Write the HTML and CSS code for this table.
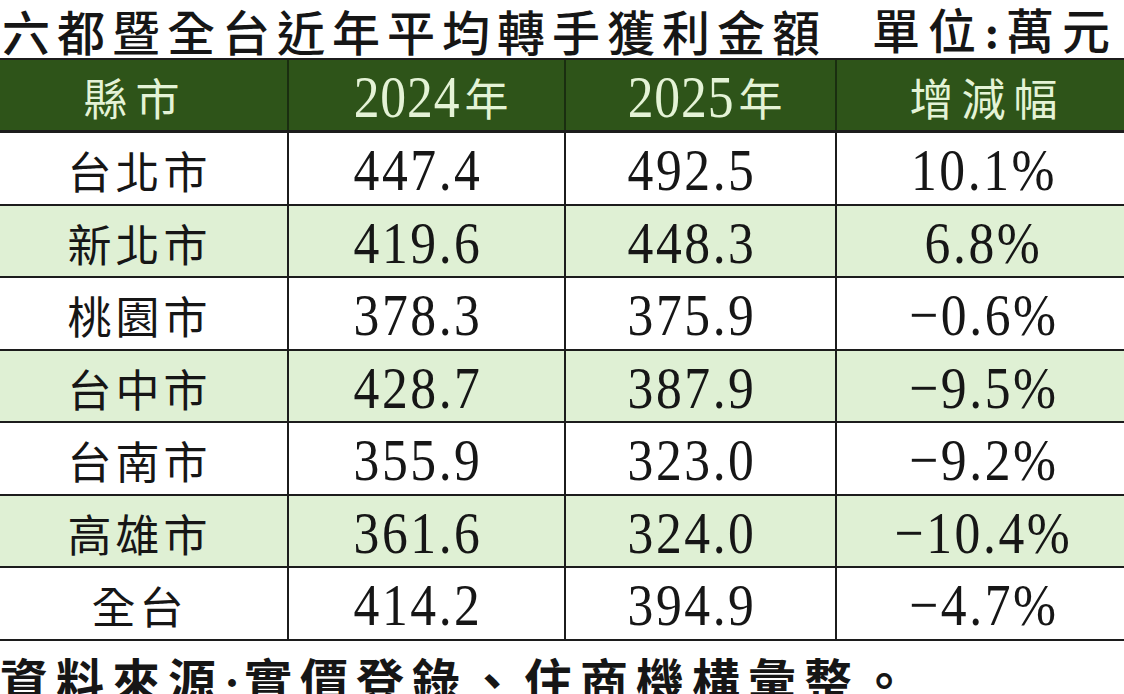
FILE: index.html
```html
<!DOCTYPE html>
<html lang="zh-Hant">
<head>
    <meta charset="UTF-8">
    <meta name="viewport" content="width=device-width, initial-scale=1.0">
    <title>六都暨全台近年平均轉手獲利金額</title>
    <link rel="stylesheet" href="styles.css">
</head>
<body>
    <div class="sheet">
        <div class="title">
            <span class="title-main">六都暨全台近年平均轉手獲利金額</span>
            <span class="title-unit">單位<span class="colon">:</span>萬元</span>
        </div>

        <div class="grid">
            <div class="row head">
                <div class="cell name">縣市</div>
                <div class="cell"><span class="num">2024</span>年</div>
                <div class="cell"><span class="num">2025</span>年</div>
                <div class="cell name change">增減幅</div>
            </div>
            <div class="row">
                <div class="cell name">台北市</div>
                <div class="cell"><span class="num">447.4</span></div>
                <div class="cell"><span class="num">492.5</span></div>
                <div class="cell"><span class="num">10.1%</span></div>
            </div>
            <div class="row alt">
                <div class="cell name">新北市</div>
                <div class="cell"><span class="num">419.6</span></div>
                <div class="cell"><span class="num">448.3</span></div>
                <div class="cell"><span class="num">6.8%</span></div>
            </div>
            <div class="row">
                <div class="cell name">桃園市</div>
                <div class="cell"><span class="num">378.3</span></div>
                <div class="cell"><span class="num">375.9</span></div>
                <div class="cell"><span class="num">−0.6%</span></div>
            </div>
            <div class="row alt">
                <div class="cell name">台中市</div>
                <div class="cell"><span class="num">428.7</span></div>
                <div class="cell"><span class="num">387.9</span></div>
                <div class="cell"><span class="num">−9.5%</span></div>
            </div>
            <div class="row">
                <div class="cell name">台南市</div>
                <div class="cell"><span class="num">355.9</span></div>
                <div class="cell"><span class="num">323.0</span></div>
                <div class="cell"><span class="num">−9.2%</span></div>
            </div>
            <div class="row alt">
                <div class="cell name">高雄市</div>
                <div class="cell"><span class="num">361.6</span></div>
                <div class="cell"><span class="num">324.0</span></div>
                <div class="cell"><span class="num">−10.4%</span></div>
            </div>
            <div class="row">
                <div class="cell name">全台</div>
                <div class="cell"><span class="num">414.2</span></div>
                <div class="cell"><span class="num">394.9</span></div>
                <div class="cell"><span class="num">−4.7%</span></div>
            </div>
        </div>

        <div class="source">資料來源<span class="dot">·</span>實價登錄、住商機構彙整。</div>
    </div>
</body>
</html>
```

FILE: styles.css
```css
body {
    margin: 0;
    background: #ffffff;
    color: #161616;
    font-family: "Noto Sans CJK TC", "Liberation Serif", serif;
    overflow: hidden;
}

.sheet {
    width: 1124px;
    height: 694px;
    overflow: hidden;
}

/* title line above the table */
.title {
    display: flex;
    align-items: center;
    height: 58px;
    padding-top: 2px;
    box-sizing: border-box;
    font-size: 48px;
    font-weight: 500;
    line-height: 1;
}

.title-main {
    letter-spacing: 7px;
    padding-left: 2px;
}

.title-unit {
    margin-left: auto;
    padding-right: 6px;
    letter-spacing: 8px;
}

.title-unit .colon {
    font-family: "Liberation Serif", serif;
    font-weight: 700;
    letter-spacing: 6px;
}

/* table */
.grid {
    border-top: 2px solid #1c1c1c;
}

.row {
    display: grid;
    grid-template-columns: 287px 277px 271px 289px;
    height: 72.5px;
    box-sizing: border-box;
    border-bottom: 2px solid #1c1c1c;
}

.row.head {
    height: 73px;
    background: #2e5419;
    color: #e4f3d6;
    border-bottom-width: 3px;
}

.row.alt {
    background: #dff0d4;
}

.cell {
    display: flex;
    align-items: center;
    justify-content: center;
    font-size: 44px;
    line-height: 1;
    padding-top: 4px;
}

.cell + .cell {
    border-left: 2px solid #1c1c1c;
}

.row.head .cell {
    border-left-color: #1a2e10;
}

.cell.name {
    letter-spacing: 4px;
    padding-right: 8px;
}

.row.head .cell.name {
    letter-spacing: 8px;
    padding-right: 16px;
}

.row.head .cell.change {
    padding-right: 0;
    padding-left: 14px;
}

.row:not(.head) .cell:nth-child(2),
.row:not(.head) .cell:nth-child(3) {
    padding-right: 24px;
}

.num {
    display: inline-block;
    font-family: "Liberation Serif", serif;
    font-size: 60px;
    letter-spacing: 3px;
    transform: scaleX(0.86);
    margin-right: -6px;
}

.row.head .num {
    letter-spacing: 1px;
    margin-right: -4px;
}

/* note under the table */
.source {
    margin-top: 9px;
    font-size: 48px;
    font-weight: 700;
    letter-spacing: 8px;
    line-height: 1.2;
    white-space: nowrap;
}

.source .dot {
    font-family: "Liberation Serif", serif;
    letter-spacing: 4px;
}
```
